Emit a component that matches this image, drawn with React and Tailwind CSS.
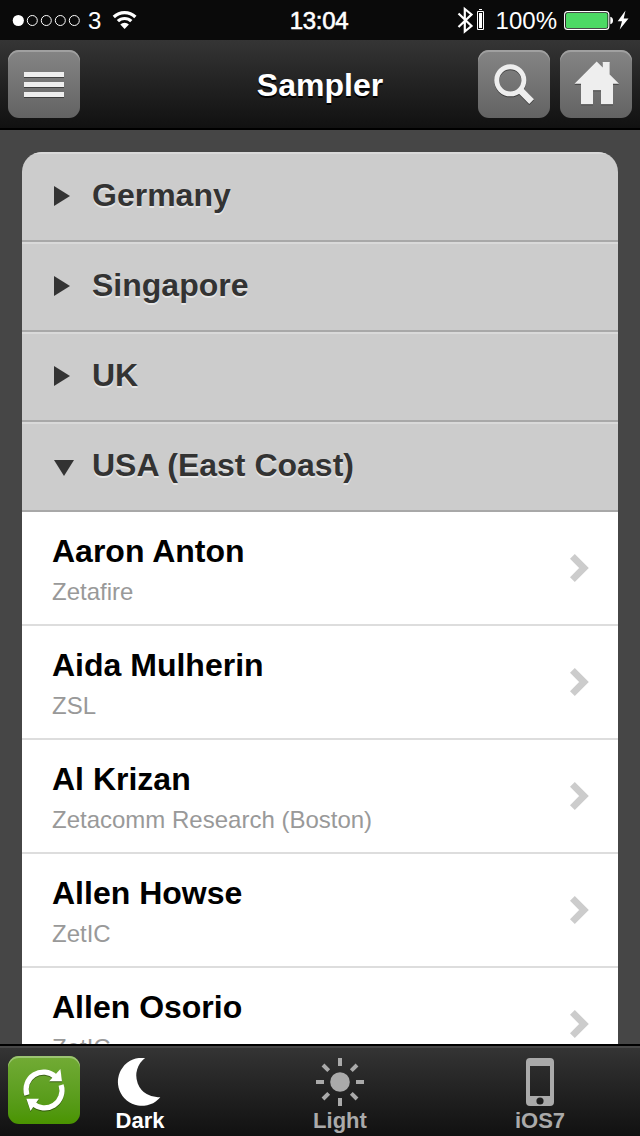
const countries = [
  { name: "Germany" },
  { name: "Singapore" },
  { name: "UK" },
  { name: "USA (East Coast)", open: true },
];

const people = [
  ["Aaron Anton", "Zetafire"],
  ["Aida Mulherin", "ZSL"],
  ["Al Krizan", "Zetacomm Research (Boston)"],
  ["Allen Howse", "ZetIC"],
  ["Allen Osorio", "ZetIC"],
];

function StatusBar() {
  return (
    <div className="flex h-10 shrink-0 items-center justify-between bg-[#0a0a0a] text-2xl leading-10 text-white">
      <div className="flex w-[240px] items-center pl-[12px]">
        <svg width="70" height="40" fill="none" stroke="#fff" strokeWidth="1">
          <circle cx="6.3" cy="20.5" r="5.6" fill="#fff" stroke="none" />
          <circle cx="20.3" cy="20.5" r="5" />
          <circle cx="34.3" cy="20.5" r="5" />
          <circle cx="48.3" cy="20.5" r="5" />
          <circle cx="62.3" cy="20.5" r="5" />
        </svg>
        <span className="ml-[6px] mt-[2px]">3</span>
        <svg className="ml-[10px]" width="28" height="40" fill="none" stroke="#fff" strokeWidth="3.2">
          <path d="M2.8 17a15.4 15.4 0 0 1 21.6 0" />
          <path d="M6.9 21.2a9.6 9.6 0 0 1 13.4 0" />
          <path d="M13.6 29l-4.3-4.4a6.2 6.2 0 0 1 8.6 0z" fill="#fff" stroke="none" />
        </svg>
      </div>
      <span className="mr-[2px] mt-[2px] tracking-[-0.3px] [-webkit-text-stroke:0.6px_#fff]">13:04</span>
      <div className="flex w-[240px] items-center justify-end pr-[10px]">
        <svg width="28" height="40" fill="none" stroke="#fff">
          <path d="M1.5 13.5l13 12.5-6.7 5.5V9l6.7 5.5-13 12.5" strokeWidth="2.2" />
          <path d="M20.5 11.5h6v18h-6z" strokeWidth="1" />
          <path d="M22 9h3v1h-3zM22 13h3v15h-3z" fill="#fff" stroke="none" />
        </svg>
        <span className="ml-[11px] mt-[2px]">100%</span>
        <svg className="ml-[7px]" width="66" height="40">
          <rect x="0.6" y="11.6" width="44.2" height="17.8" rx="3" fill="none" stroke="#fff" strokeWidth="1.1" />
          <rect x="2" y="13" width="41.5" height="15" rx="1.6" fill="#4cd964" />
          <path d="M46.3 16.8q2.7.4 2.7 3.7t-2.7 3.7z" fill="#fff" />
          <path d="M61.5 10.5l-7.8 10.8h4.3l-2.3 8.2 8.8-11h-4.8z" fill="#fff" />
        </svg>
      </div>
    </div>
  );
}

function GreyButton({ children }) {
  return (
    <button className="h-[68px] w-[72px] shrink-0 rounded-[11px] bg-linear-to-b from-[#858585] to-[#636363] shadow-[inset_0_2px_0_#a0a0a0]">
      <svg className="drop-shadow-[0_1.5px_0_rgba(0,0,0,0.45)]" width="72" height="68" fill="#eee">
        {children}
      </svg>
    </button>
  );
}

function Header() {
  return (
    <header className="flex h-[90px] shrink-0 items-start border-b-2 border-black bg-linear-to-b from-[#353535] to-[#111] px-2 pt-[10px]">
      <GreyButton>
        <path d="M16 22h40v5H16zM16 32h40v5H16zM16 42h40v5H16z" />
      </GreyButton>
      <h1 className="flex-1 pl-[82px] text-center text-[32px] leading-[70px] font-bold text-white [text-shadow:0_2px_0_#000]">
        Sampler
      </h1>
      <div className="flex gap-[10px]">
        <GreyButton>
          <circle cx="32.3" cy="30.3" r="13.6" fill="none" stroke="#eee" strokeWidth="4.9" />
          <path d="M41.2 39.2l12.4 12.4" fill="none" stroke="#eee" strokeWidth="6.6" />
        </GreyButton>
        <GreyButton>
          <path d="M36.7 11.5L42.7 17.5V12h7v12.5L59 33.7h-6v20.6H41v-14h-8v14H21V33.7h-6.5z" />
        </GreyButton>
      </div>
    </header>
  );
}

function CountryRow({ name, open }) {
  return (
    <div className="flex h-[90px] items-center border-b-2 border-[#a8a8a8] bg-[#ccc] pl-8 shadow-[inset_0_2px_0_#d9d9d9]">
      <svg className="mr-[18px]" width="20" height="20" fill="#333">
        {open ? <path d="M0 4h20L10 20z" /> : <path d="M0 0v20l16-10z" />}
      </svg>
      <span className="-mt-[2px] text-[32px] leading-10 font-bold text-[#333] [text-shadow:0_2px_0_#e6e6e6]">{name}</span>
    </div>
  );
}

function PersonRow({ name, company }) {
  return (
    <div className="flex h-[114px] shrink-0 items-center justify-between border-b-2 border-[#ddd] bg-white pr-[28px] pl-[30px]">
      <div className="pt-[5px]">
        <div className="text-[32px] leading-10 font-bold text-black">{name}</div>
        <div className="mt-[3px] text-2xl leading-9 text-[#999]">{company}</div>
      </div>
      <svg width="20" height="28" fill="none" stroke="#ccc" strokeWidth="6.8">
        <path d="M2.4 2.4L14 14 2.4 25.6" />
      </svg>
    </div>
  );
}

function Tab({ label, active, children }) {
  return (
    <div className={active ? "flex w-[100px] flex-col items-center text-white" : "flex w-[100px] flex-col items-center text-[#aaa]"}>
      <svg width="48" height="48" fill="currentColor">{children}</svg>
      <span className="mt-[2px] text-[22px] leading-[26px] font-bold">{label}</span>
    </div>
  );
}

function Footer() {
  return (
    <footer className="flex h-[92px] shrink-0 items-start border-t-2 border-black bg-linear-to-b from-[#353535] to-[#111] pt-[10px] pr-[50px] pl-2 shadow-[inset_0_2px_0_#474747]">
      <button className="h-[68px] w-[72px] shrink-0 rounded-[11px] bg-linear-to-b from-[#72ab35] to-[#4a9400] shadow-[inset_0_2px_0_#9cc472]">
        <svg className="drop-shadow-[0_1.5px_0_rgba(0,0,0,0.4)]" width="72" height="68" fill="none" stroke="#fff" strokeWidth="5.2">
          <path d="M18.9 39A17.5 17.5 0 0 1 47.5 20.8" />
          <path d="M53.1 29A17.5 17.5 0 0 1 24.5 47.2" />
          <path d="M52.4 13.1l1.6 12.2H41.2z" fill="#fff" stroke="none" />
          <path d="M18.4 42.7h12.5l-8.4 12.2z" fill="#fff" stroke="none" />
        </svg>
      </button>
      <nav className="ml-[10px] flex flex-1 justify-between pt-[2px]">
        <Tab label="Dark" active>
          <path d="M28.8 0A24 24 0 1 0 44 39.2A21.8 21.8 0 0 1 28.8 0z" transform="translate(.3 0)" />
        </Tab>
        <Tab label="Light">
          <circle cx="24" cy="24" r="9.8" />
          <path
            d="M24 0v8M24 40v8M0 24h8M40 24h8M7 7l5.7 5.7M35.3 35.3l5.7 5.7M7 41l5.7-5.7M35.3 12.7L41 7"
            stroke="currentColor"
            strokeWidth="4"
          />
        </Tab>
        <Tab label="iOS7">
          <path
            fillRule="evenodd"
            d="M14 0h20a4 4 0 0 1 4 4v40a4 4 0 0 1-4 4H14a4 4 0 0 1-4-4V4a4 4 0 0 1 4-4zM14 8v30h20V8zM24 39.4a3.6 3.6 0 1 0 0 7.2a3.6 3.6 0 1 0 0-7.2z"
          />
        </Tab>
      </nav>
    </footer>
  );
}

export default function App() {
  return (
    <div className="flex h-[1136px] w-[640px] flex-col overflow-hidden bg-[#464646] font-['Liberation_Sans',Arial,sans-serif]">
      <StatusBar />
      <Header />
      <main className="min-h-0 flex-1 overflow-hidden px-[22px] pt-[22px]">
        <div className="overflow-hidden rounded-t-[20px]">
          {countries.map((c) => (
            <CountryRow key={c.name} {...c} />
          ))}
          {people.map(([name, company]) => (
            <PersonRow key={name} name={name} company={company} />
          ))}
        </div>
      </main>
      <Footer />
    </div>
  );
}
